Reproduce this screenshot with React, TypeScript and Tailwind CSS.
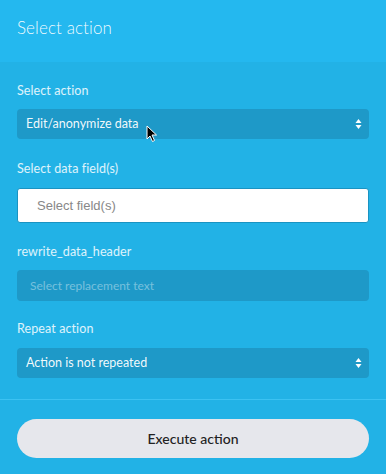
const Chevrons = () => (
  <svg width="7" height="12" viewBox="0 0 7 12" className="shrink-0">
    <path d="M3.5 1 L6.5 5 H0.5 Z" fill="#ffffff" />
    <path d="M3.5 11 L6.5 7 H0.5 Z" fill="#ffffff" />
  </svg>
);

const Cursor = () => (
  <svg
    width="12"
    height="18"
    viewBox="0 0 12 18"
    className="absolute left-[146px] top-[125px] pointer-events-none"
  >
    <path
      d="M1 1 L1 14 L4 11 L6.5 16.5 L8.5 15.5 L6 10 L10.5 10 Z"
      fill="#000"
      stroke="#fff"
      strokeWidth="1"
      strokeLinejoin="round"
    />
  </svg>
);

const Label = ({ children }: { children: React.ReactNode }) => (
  <p className="text-[12.5px] leading-4 tracking-[0.1px] text-white/85">{children}</p>
);

const FakeSelect = ({ value }: { value: string }) => (
  <div className="flex h-[30px] items-center justify-between rounded-[4px] bg-[#1e99c8] pl-[9px] pr-[7px] text-[12.5px] text-white/95">
    <span>{value}</span>
    <Chevrons />
  </div>
);

export default function App() {
  return (
    <div
      className="relative h-[474px] w-[386px] overflow-hidden bg-[#22b2e6]"
      style={{ fontFamily: "Lato, 'Noto Sans', sans-serif" }}
    >
      {/* Header */}
      <div className="flex h-[62px] items-center bg-[#24b8ef] px-[17px] pb-[6px]">
        <h1 className="text-[17px] font-light tracking-[0.1px] text-white/95">Select action</h1>
      </div>

      {/* Form */}
      <div className="flex flex-col px-[17px] pt-[21px]">
        <Label>Select action</Label>
        <div className="mt-[10px]">
          <FakeSelect value="Edit/anonymize data" />
        </div>

        <div className="mt-[22px]">
          <Label>Select data field(s)</Label>
        </div>
        <div className="mt-[11px] flex h-[35px] items-center rounded-[3px] border border-[#1a93c2] bg-white pl-[19px]">
          <span
            className="text-[13px] text-[#888]"
            style={{ fontFamily: "'Liberation Sans', Arial, sans-serif" }}
          >
            Select field(s)
          </span>
        </div>

        <div className="mt-[21px]">
          <Label>rewrite_data_header</Label>
        </div>
        <div className="mt-[10px] flex h-[31px] items-center rounded-[4px] bg-[#1e99c8] pl-[13px] text-[12px] text-white/40">
          Select replacement text
        </div>

        <div className="mt-[20px]">
          <Label>Repeat action</Label>
        </div>
        <div className="mt-[11px]">
          <FakeSelect value="Action is not repeated" />
        </div>
      </div>

      {/* Footer */}
      <div className="mt-[21px] border-t border-[#3cc2f2] px-[17px] pt-[19px]">
        <button className="flex h-[39px] w-full items-center justify-center rounded-full bg-[#e6e7ec] text-[14px] font-medium text-[#222]">
          Execute action
        </button>
      </div>

      <Cursor />
    </div>
  );
}
